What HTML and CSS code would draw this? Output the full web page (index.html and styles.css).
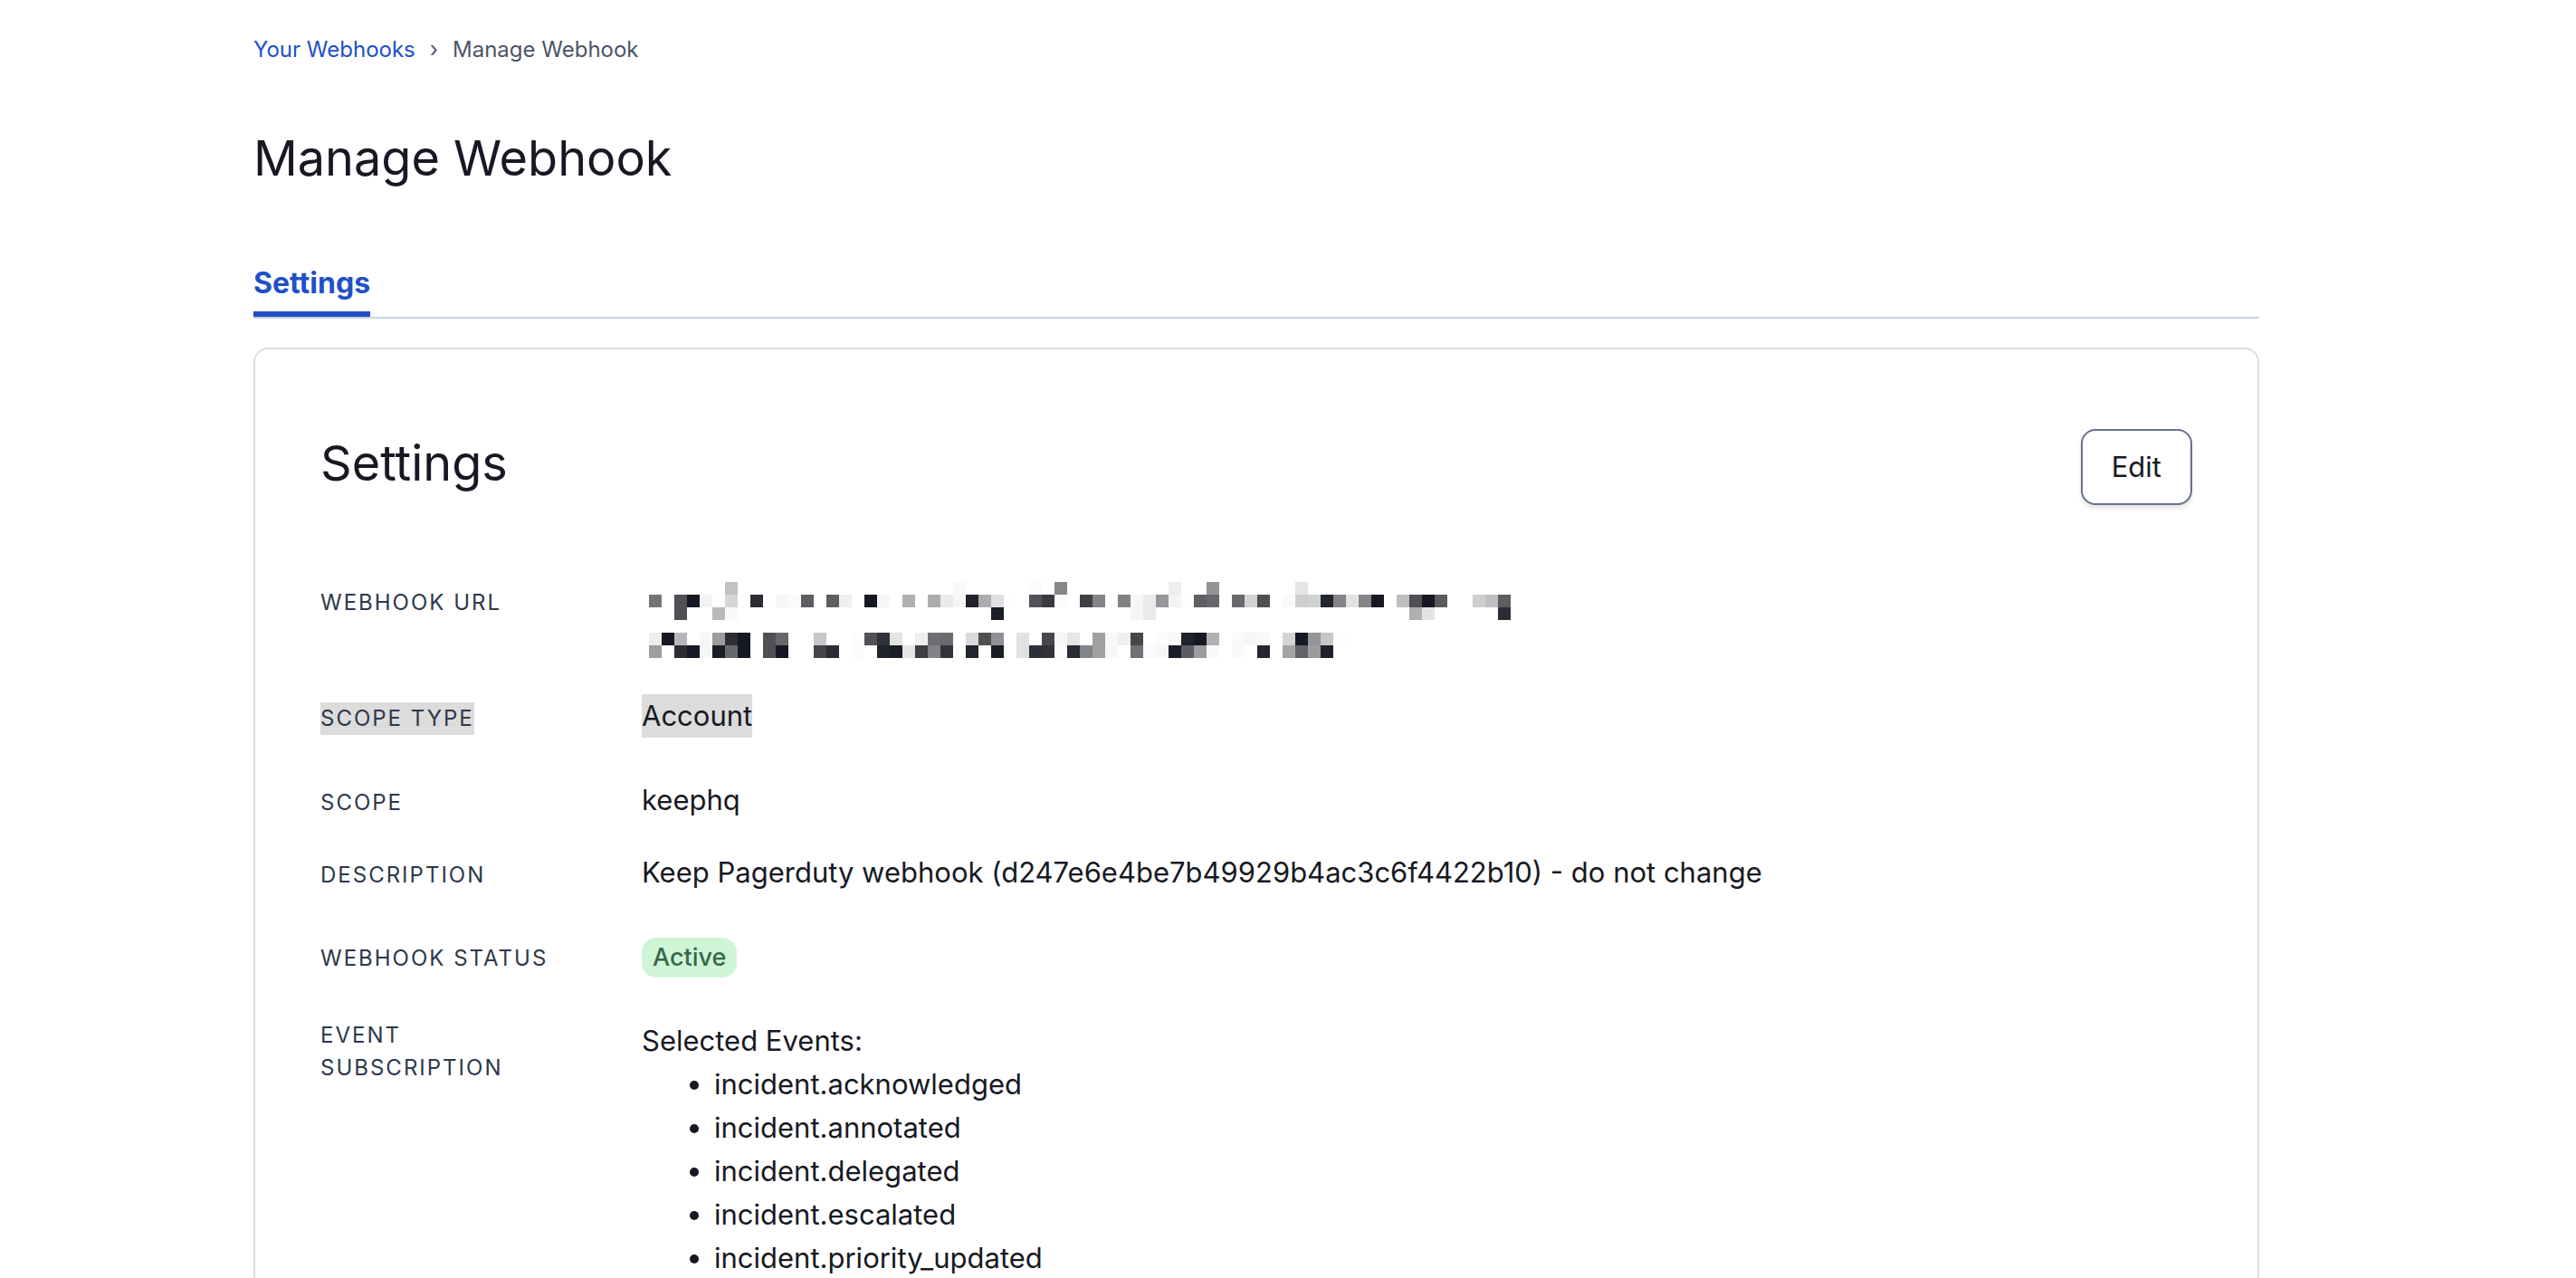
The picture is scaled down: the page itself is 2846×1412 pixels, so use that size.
FILE: index.html
```html
<!DOCTYPE html>
<html lang="en">
<head>
<meta charset="utf-8">
<meta name="viewport" content="width=device-width, initial-scale=1">
<title>Manage Webhook</title>
<link rel="stylesheet" href="styles.css">
</head>
<body>
<main class="page">
  <nav class="breadcrumb" aria-label="Breadcrumb">
    <a class="breadcrumb-link" href="#">Your Webhooks</a>
    <span class="breadcrumb-separator" aria-hidden="true">›</span>
    <span>Manage Webhook</span>
  </nav>
  <h1 class="title">Manage Webhook</h1>
  <nav class="tabs" aria-label="Webhook sections">
    <a class="tab" href="#settings" aria-current="page">Settings</a>
  </nav>
  <section class="card" id="settings">
    <header class="card-header">
      <h2 class="title">Settings</h2>
      <button class="button" type="button">Edit</button>
    </header>
    <dl class="details">
      <div class="row row-url">
        <dt class="label">Webhook URL</dt>
        <dd class="value value-url">
          <svg class="redacted" viewBox="0 0 68 6" shape-rendering="crispEdges" role="img" aria-label="Hidden URL">
            <g>
              <rect x="6" fill="#c2c2c2"/><rect x="24" fill="#f9f9f9"/><rect x="30" fill="#fbfbfb"/><rect x="32" fill="#868688"/><rect x="41" fill="#eee"/><rect x="44" fill="#939496"/><rect x="51" fill="#e5e5e5"/>
            </g>
            <g transform="translate(0 1)">
              <rect x="0" fill="#737478"/><rect x="2" fill="#504f54"/><rect x="3" fill="#161923"/><rect x="4" fill="#f3f3f3"/><rect x="6" fill="#d5d6d8"/><rect x="8" fill="#2b2c31"/><rect x="10" fill="#f6f6f6"/><rect x="11" fill="#fbfbfb"/><rect x="12" fill="#5d5e62"/><rect x="14" fill="#5d5e62"/><rect x="15" fill="#efefef"/><rect x="17" fill="#161923"/><rect x="18" fill="#f6f6f6"/><rect x="20" fill="#b0b1b4"/><rect x="22" fill="#ababad"/><rect x="23" fill="#eaeaea"/>
              <rect x="24" fill="#f6f6f6"/><rect x="25" fill="#1f222b"/><rect x="26" fill="#abacae"/><rect x="27" fill="#dedfe2"/><rect x="28" fill="#fdfdfd"/><rect x="30" fill="#525359"/><rect x="31" fill="#3a3a3f"/><rect x="32" fill="#fbfbfb"/><rect x="34" fill="#3f3f45"/><rect x="35" fill="#848486"/><rect x="37" fill="#828284"/><rect x="38" fill="#f6f6f6"/><rect x="39" fill="#eaeaea"/><rect x="40" fill="#96969b"/><rect x="41" fill="#f3f3f3"/><rect x="42" fill="#fdfdfd"/><rect x="43" fill="#5e5f65"/><rect x="44" fill="#69696d"/><rect x="46" fill="#69696d"/><rect x="47" fill="#d2d2d2"/>
              <rect x="48" fill="#504f54"/><rect x="50" fill="#fafafa"/><rect x="51" fill="#cdcfd1"/><rect x="52" fill="#d0d2d2"/><rect x="53" fill="#232730"/><rect x="54" fill="#848486"/><rect x="55" fill="#e2e2e2"/><rect x="56" fill="#848587"/><rect x="57" fill="#161923"/><rect x="59" fill="#bdbec0"/><rect x="60" fill="#504f54"/><rect x="61" fill="#161923"/><rect x="62" fill="#5b5b5f"/><rect x="65" fill="#cecece"/><rect x="66" fill="#bfbfc1"/><rect x="67" fill="#5d5e62"/>
            </g>
            <g transform="translate(0 2)">
              <rect x="2" fill="#4f4f54"/><rect x="5" fill="#b8b9bc"/><rect x="6" fill="#f9f9f9"/><rect x="27" fill="#1a1d26"/><rect x="38" fill="#f6f6f6"/><rect x="39" fill="#eaeaea"/><rect x="60" fill="#afb0b2"/><rect x="61" fill="#e3e3e3"/><rect x="67" fill="#292d36"/>
            </g>
            <g transform="translate(0 4)">
              <rect x="0" fill="#eee"/><rect x="1" fill="#161923"/><rect x="2" fill="#b8b8bb"/><rect x="4" fill="#f7f7f7"/><rect x="5" fill="#9c9d9f"/><rect x="6" fill="#2d2d32"/><rect x="7" fill="#161923"/><rect x="9" fill="#504f54"/><rect x="10" fill="#68696d"/><rect x="13" fill="#c7c7ca"/><rect x="16" fill="#fcfcfc"/><rect x="17" fill="#515156"/><rect x="18" fill="#30333c"/><rect x="19" fill="#e3e3e3"/><rect x="21" fill="#eee"/><rect x="22" fill="#6e6f73"/><rect x="23" fill="#6a6b6f"/>
              <rect x="25" fill="#d7d9db"/><rect x="26" fill="#504f4f"/><rect x="27" fill="#8f9194"/><rect x="29" fill="#dfe1e3"/><rect x="31" fill="#46464b"/><rect x="32" fill="#f7f7f7"/><rect x="33" fill="#e6e6e6"/><rect x="35" fill="#a1a1a1"/><rect x="36" fill="#f9f9f9"/><rect x="37" fill="#efefef"/><rect x="38" fill="#46474b"/><rect x="40" fill="#fcfcfc"/><rect x="41" fill="#f8f8f8"/><rect x="42" fill="#1f222b"/><rect x="43" fill="#161923"/><rect x="44" fill="#b0b1b4"/><rect x="46" fill="#fafafa"/><rect x="47" fill="#f7f7f7"/>
              <rect x="48" fill="#f9f9f9"/><rect x="50" fill="#d4d4d4"/><rect x="51" fill="#161923"/><rect x="52" fill="#929496"/><rect x="53" fill="#c7c7ca"/><rect x="54" fill="#fdfdfd"/>
            </g>
            <g transform="translate(0 5)">
              <rect x="0" fill="#9d9ea1"/><rect x="2" fill="#2d2d32"/><rect x="3" fill="#161923"/><rect x="4" fill="#f6f6f6"/><rect x="5" fill="#191d26"/><rect x="6" fill="#68696e"/><rect x="7" fill="#161923"/><rect x="9" fill="#504f54"/><rect x="10" fill="#161923"/><rect x="13" fill="#434349"/><rect x="14" fill="#292c35"/><rect x="16" fill="#fcfcfc"/><rect x="18" fill="#20242d"/><rect x="19" fill="#191d26"/><rect x="20" fill="#e5e5e5"/><rect x="21" fill="#3d3d43"/><rect x="22" fill="#828386"/><rect x="23" fill="#333439"/>
              <rect x="24" fill="#fcfcfc"/><rect x="25" fill="#20252e"/><rect x="27" fill="#191d26"/><rect x="29" fill="#dfe1e3"/><rect x="30" fill="#2c3039"/><rect x="31" fill="#323338"/><rect x="32" fill="#fcfcfc"/><rect x="33" fill="#272b34"/><rect x="34" fill="#838488"/><rect x="35" fill="#a1a1a1"/><rect x="36" fill="#f7f7f7"/><rect x="38" fill="#707177"/><rect x="39" fill="#fafafa"/><rect x="40" fill="#f6f6f6"/><rect x="41" fill="#191d26"/><rect x="42" fill="#5c5c62"/><rect x="43" fill="#9c9b9e"/><rect x="44" fill="#f8fafa"/><rect x="46" fill="#fafafa"/>
              <rect x="48" fill="#232730"/><rect x="50" fill="#a3a4a6"/><rect x="51" fill="#62636a"/><rect x="52" fill="#9c9b9e"/><rect x="53" fill="#1f222b"/>
            </g>
          </svg>
        </dd>
      </div>
      <div class="row row-type">
        <dt class="label"><span class="selected">Scope type</span></dt>
        <dd class="value"><span class="selected">Account</span></dd>
      </div>
      <div class="row">
        <dt class="label">Scope</dt>
        <dd class="value">keephq</dd>
      </div>
      <div class="row">
        <dt class="label">Description</dt>
        <dd class="value">Keep Pagerduty webhook (d247e6e4be7b49929b4ac3c6f4422b10) - do not change</dd>
      </div>
      <div class="row row-status">
        <dt class="label">Webhook status</dt>
        <dd class="value"><span class="badge">Active</span></dd>
      </div>
      <div class="row row-top">
        <dt class="label">Event subscription</dt>
        <dd class="value">
          Selected Events:
          <ul class="events">
            <li>incident.acknowledged</li>
            <li>incident.annotated</li>
            <li>incident.delegated</li>
            <li>incident.escalated</li>
            <li>incident.priority_updated</li>
          </ul>
        </dd>
      </div>
    </dl>
  </section>
</main>
</body>
</html>
```
FILE: styles.css
```css
* {
  box-sizing: border-box;
}

body {
  height: 100vh;
  margin: 0;
  overflow: hidden;
  background: #fff;
  color: #161923;
  font-family: Inter, "Liberation Sans", sans-serif;
  font-size: 31px;
  line-height: 48px;
}

.page {
  padding: 37px 350px 72px 280px;
}

.breadcrumb {
  display: flex;
  gap: 16px;
  color: #4b5567;
  font-size: 24px;
  line-height: 36px;
}

.breadcrumb-link {
  color: #2050c8;
  text-decoration: none;
}

.title {
  margin: 0;
  font-size: 54px;
  font-weight: 400;
  line-height: 76px;
}

.breadcrumb + .title {
  margin: 64px 0 76px;
}

.tabs {
  display: flex;
  border-bottom: 2px solid #cbd5e0;
}

.tab {
  padding-bottom: 7px;
  border-bottom: 6px solid #2050c8;
  color: #2050c8;
  font-size: 32px;
  font-weight: 700;
  text-decoration: none;
}

.card {
  margin-top: 32px;
  padding: 88px 72px;
  border: 2px solid #dedede;
  border-radius: 16px;
}

.card-header {
  display: flex;
  align-items: flex-start;
  justify-content: space-between;
}

.button {
  padding: 16px 32px;
  border: 2px solid #647289;
  border-radius: 16px;
  background: #fff;
  box-shadow: 0 4px 4px rgba(0, 0, 0, 0.1);
  color: inherit;
  font: inherit;
}

.details {
  display: flex;
  flex-direction: column;
  gap: 32px;
  margin: 80px 0 0;
}

.row {
  display: grid;
  grid-template-columns: 283px 1fr;
  column-gap: 72px;
  align-items: baseline;
}

.row-url,
.row-top {
  align-items: start;
}

.row-url .label {
  padding-top: 10px;
}

.row-type {
  padding-bottom: 13px;
}

.row-status {
  padding: 16px 0 14px;
}

.label {
  color: #2d384a;
  font-size: 24px;
  letter-spacing: 2px;
  line-height: 36px;
  text-transform: uppercase;
}

.value {
  margin: 0;
}

.value-url {
  padding: 5px 8px 8px;
}

.redacted {
  display: block;
  width: 952px;
  max-width: 100%;
}

.redacted rect {
  width: 1px;
  height: 1px;
}

.selected {
  display: inline-block;
  background: #dcdcdc;
}

.badge {
  display: block;
  width: fit-content;
  padding: 0 12px;
  border-radius: 16px;
  background: #cff5d7;
  color: #38684a;
  font-size: 27px;
  font-weight: 500;
  line-height: 44px;
}

.events {
  margin: 0;
  padding-left: 80px;
}
```
